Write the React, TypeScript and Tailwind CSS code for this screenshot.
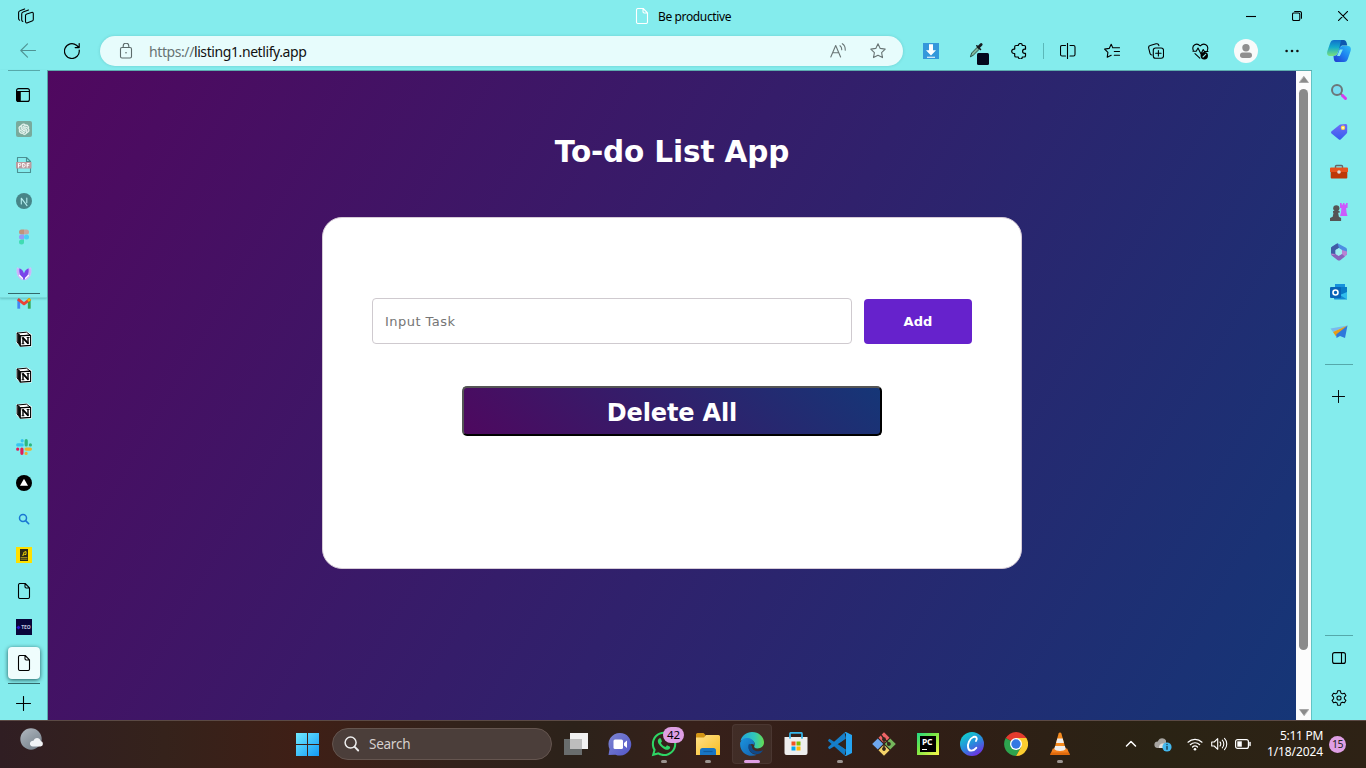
import React from "react";
import type { ReactNode } from "react";
import { AiOutlineOpenAI } from "react-icons/ai";
import { FaWhatsapp } from "react-icons/fa";

type IconProps = { children: ReactNode; w?: number; h?: number; box?: string; className?: string };

/* Line icon by default; coloured shapes set their own fill and stroke. */
function Icon({ children, w = 16, h = 16, box, className = "" }: IconProps) {
  return (
    <svg width={w} height={h} viewBox={box ?? `0 0 ${w} ${h}`} fill="none" stroke="currentColor" strokeWidth="1.1" strokeLinecap="round" strokeLinejoin="round" className={`block shrink-0 ${className}`}>
      {children}
    </svg>
  );
}

function Cell({ children, className = "w-11" }: { children?: ReactNode; className?: string }) {
  return <div className={`flex shrink-0 items-center justify-center ${className}`}>{children}</div>;
}

const PageIcon = ({ className = "" }: { className?: string }) => (
  <Icon className={className}>
    <path d="M4 .5h5.200l4.300 4.300V14A1.500 1.500 0 0 1 12 15.500H4A1.500 1.500 0 0 1 2.500 14V2A1.500 1.500 0 0 1 4 .5z M9 .8v3a1.200 1.200 0 0 0 1.200 1.200h3" />
  </Icon>
);

const PlusIcon = ({ size = 15 }: { size?: number }) => (
  <Icon w={size} h={size} box="0 0 15 15">
    <path d="M7.500 .5v14M.5 7.500h14" />
  </Icon>
);

function TitleBar() {
  return (
    <header className="flex h-8 shrink-0 items-center">
      <Cell className="w-[52px]">
        <Icon>
          <path d="M1.600 12.200C.8 11.800.6 11.300.6 10.600V4.600c0-1 .5-1.600 1.400-1.900L6.600.9M4.900 13.400c-.9-.3-1.200-.8-1.200-1.500V5.900c0-1 .5-1.500 1.400-1.800L10.500 2M8.800 5.900l4.700-1.500c1-.3 1.800.2 1.800 1.200v5.900c0 .8-.4 1.300-1.200 1.600l-4.600 1.700c-1 .4-2-.2-2-1.300V7.500c0-.8.500-1.300 1.300-1.600z" />
        </Icon>
      </Cell>
      <div className="flex flex-1 items-center gap-2 pl-[582px]">
        <PageIcon className="text-white" />
        <span className="mt-px text-[12px] tracking-[-0.37px] whitespace-nowrap">Be productive</span>
      </div>
      <Cell className="w-[46px]">
        <Icon w={10} h={10}><path d="M0 5.500h10" strokeLinecap="butt" /></Icon>
      </Cell>
      <Cell className="w-[46px]">
        <Icon w={10} h={10}>
          <rect x=".5" y="2" width="7.300" height="7.500" rx="1.300" />
          <path d="M2.700.5h4.800a2 2 0 0 1 2 2v4.800" />
        </Icon>
      </Cell>
      <Cell className="w-[46px]">
        <Icon w={10} h={10}><path d="M.3.300l9.400 9.400M9.700.3L.3 9.700" /></Icon>
      </Cell>
    </header>
  );
}

function Toolbar() {
  return (
    <div className="flex h-[38px] shrink-0 items-center">
      <Cell className="w-14">
        <Icon className="text-[#4f9293]"><path d="M15.500 7.500H.8M7.500.8L.8 7.500l6.700 6.700" /></Icon>
      </Cell>
      <Cell className="w-8">
        <Icon><path strokeWidth="1.200" d="M15.200 7A7.400 7.400 0 1 1 12.500 2.300l2.500 2.200M15.200.6v4h-4" /></Icon>
      </Cell>
      <div className="ml-3 flex h-[30px] w-[803px] shrink-0 items-center rounded-full bg-[#e7fcfc] pl-[18px] shadow-[0_0_3px_rgba(40,120,120,0.25)]">
        <Icon className="text-[#5d6b6b]">
          <rect x="2.500" y="4.500" width="11" height="10.500" rx="1.500" />
          <path d="M5.200 4.300V3a2.800 2.800 0 0 1 5.600 0v1.300" />
          <circle cx="8" cy="9.700" r=".8" fill="currentColor" stroke="none" />
        </Icon>
        <span className="ml-[15px] text-[14px] tracking-[-0.41px] whitespace-nowrap text-[#111]"><span className="text-[#687373]">https://</span>listing1.netlify.app</span>
        <div className="ml-auto flex pr-[5px]">
          <Cell className="w-10">
            <Icon className="text-[#697575]"><path d="M.8 14L5.700 2.500l4.900 11.500M2.600 9.800h6.200M10 2.700c1.300.9 1.800 2.200 1.700 4M12.300.7c2.300 1.300 3.100 3.500 2.900 6.500" /></Icon>
          </Cell>
          <Cell className="w-10">
            <Icon box="0 0 16 16" className="text-[#697575]"><path d="M8 .8l2.200 4.600 5 .7-3.600 3.500.9 5L8 12.300l-4.500 2.300.9-5L.8 6.100l5-.7z" /></Icon>
          </Cell>
        </div>
      </div>
      <Cell className="ml-1.5 w-11">
        <Icon>
          <path d="M0 0h16v16H0z" fill="#3498db" stroke="none" />
          <path d="M6 1.300h4v6h3L8 12.500 3 7.300h3zM4 13.700h8v1H4z" fill="#fff" stroke="none" />
        </Icon>
      </Cell>
      <Cell className="ml-1 w-11">
        <Icon w={22} h={26} className="mt-[2px]">
          <path d="M2.500 17.500l1.200-3.500L9.500 8l2 2-6 6z" fill="#7fb59b" stroke="#20443b" strokeWidth=".9" />
          <path d="M8.800 6.800l3.700 3.700" stroke="#161c20" strokeWidth="1.600" />
          <path d="M10.500 8.300l2.700-2.800" stroke="#161c20" strokeWidth="2.800" />
          <rect x="9" y="14" width="12" height="12" rx="1.500" fill="#03071c" stroke="none" />
        </Icon>
      </Cell>
      <Cell className="w-9">
        <Icon>
          <path strokeWidth="1.200" d="M5 2.500h2.300a2 2 0 0 1 4 0h1.900c.8 0 1.300.5 1.300 1.300v2.400h-.8a2.100 2.100 0 0 0 0 4.200h.8v2.300c0 .8-.5 1.300-1.300 1.300h-1.900a2 2 0 0 1-4 0H5c-.8 0-1.300-.5-1.300-1.300v-2.200h-.8a2.200 2.200 0 1 1 0-4.400h.8V3.800c0-.8.5-1.300 1.300-1.300z" />
        </Icon>
      </Cell>
      <div className="mr-0.5 ml-1.5 h-4 w-px bg-[#5bb8b9]" />
      <Cell>
        <Icon><path d="M5.500 2.500H2A1.500 1.500 0 0 0 .5 4v7.500A1.500 1.500 0 0 0 2 13h3.500M7.500.3v15.400M10 2.500h3.500A1.500 1.500 0 0 1 15 4v7.500a1.500 1.500 0 0 1-1.500 1.500H10" /></Icon>
      </Cell>
      <Cell>
        <Icon><path d="M8.700 4.600L7.200 1.200 5.200 5.400l-4.600.7L3.900 9.400l-.7 4.900 4-2.100M8.700 4.700h6.800M10.300 8.500h5.200M10.300 12.300h5.200" /></Icon>
      </Cell>
      <Cell>
        <Icon>
          <rect x="5.300" y="5" width="10.200" height="10.300" rx="2.300" />
          <path d="M10.400 7.500v5.400M7.700 10.200h5.400M4 12c-1.200-.1-1.800-.8-2-1.700L.7 5.200C.4 3.800 1 2.800 2.200 2.500L8 .8c1.500-.4 2.500.3 2.900 1.900" />
        </Icon>
      </Cell>
      <Cell>
        <Icon w={17} h={17}>
          <path d="M1.300 7.500C-.7 2.200 4.800-1 8.200 3 11.800-1 17.300 2.200 15.300 7.500M3 10.700l4.800 4.500" />
          <path d="M1 8.200h3.200L6 5l3 6 2.200-4.500 1.200 2h3.600" />
          <circle cx="12.300" cy="12.800" r="3.700" fill="#000" stroke="none" />
          <path d="M11 14l2.700-2.700" stroke="#84eced" />
        </Icon>
      </Cell>
      <Cell className="w-12">
        <div className="flex size-6 items-center justify-center rounded-full bg-[#f8fafa]">
          <Icon w={12} h={14}><circle cx="6" cy="3.700" r="3.700" fill="#8f8f8f" stroke="none" /><rect x="0" y="8.500" width="12" height="5.500" rx="2.700" fill="#8f8f8f" stroke="none" /></Icon>
        </div>
      </Cell>
      <Cell>
        <Icon w={14} h={4}><g fill="#111" stroke="none"><circle cx="1.600" cy="2" r="1.300" /><circle cx="7" cy="2" r="1.300" /><circle cx="12.400" cy="2" r="1.300" /></g></Icon>
      </Cell>
      <Cell className="w-[50px]">
        <svg width="24" height="22" viewBox="0 0 24 22" className="block">
          <defs>
            <linearGradient id="cpa" x1="0" y1="0" x2="0" y2="1"><stop stopColor="#116fcb" /><stop offset=".45" stopColor="#14aacc" /><stop offset="1" stopColor="#7be17b" /></linearGradient>
            <linearGradient id="cpb" x1="1" y1="0" x2="0" y2="1"><stop stopColor="#2fc0f7" /><stop offset=".5" stopColor="#1c7eef" /><stop offset="1" stopColor="#2336ce" /></linearGradient>
          </defs>
          <path d="M7 0h9.500L10.500 13c-.8 2.300-2 3-4 3H3C0 16-.3 13.500.4 11L3 3.500C3.800 1 5 0 7 0z" fill="url(#cpa)" />
          <path d="M14 0h2.500c2 0 2.800 1.500 3.300 3.500l.5 2h-4c-1.800 0-2.800.6-3.500 2.500L12 10z" fill="#0d57b0" />
          <path d="M17 6h4c2.800 0 3.300 2.500 2.600 5L21 18.500c-.8 2.500-2 3.500-4 3.500H9.500c-2.300 0-2.500-2-2.800-4l-.2-2c2.300 0 3.500-.7 4.300-3l1.600-4.500C13.200 6.500 14.500 6 17 6z" fill="url(#cpb)" />
          <path d="M12.800 9.500h3L12.800 16H10z" fill="#84eced" />
        </svg>
      </Cell>
    </div>
  );
}

const Notion = () => (
  <Icon>
    <path d="M.3 1.300L10.800.2l5 3.200v12.200l-11.500.4-4-4z" fill="#fff" stroke="none" />
    <path d="M1.500 2l9-.8L14.200 4 5 4.700z" fill="#fff" stroke="#000" strokeWidth="1" />
    <path d="M1.300 2.200L4 4.600v10.200L1.300 11.200z" fill="#111" stroke="#000" strokeWidth=".7" />
    <path d="M4.300 4.900l10.300-.7v10.200l-10.300.7z" fill="#fff" stroke="#000" strokeWidth="1.100" />
    <path d="M7 12.500V7M12 12.300V6.500" stroke="#000" strokeWidth="1.400" /><path d="M7.200 7.200l4.600 5" stroke="#000" strokeWidth="1.900" />
    <path d="M6 6.800h1.500M11 6.500h2.200M6 12.700h2" stroke="#000" strokeWidth=".8" />
  </Icon>
);

const Figma = () => (
  <Icon className="opacity-55"><g stroke="none">
    <path d="M5.500.5H8v5H5.500a2.500 2.500 0 0 1 0-5z" fill="#f24e1e" /><path d="M8 .5h2.500a2.500 2.500 0 0 1 0 5H8z" fill="#ff7262" />
    <path d="M5.500 5.500H8v5H5.500a2.500 2.500 0 0 1 0-5z" fill="#a259ff" /><circle cx="10.500" cy="8" r="2.500" fill="#1abcfe" /><path d="M5.500 10.500H8V13a2.500 2.500 0 1 1-2.500-2.500z" fill="#0acf83" />
  </g></Icon>
);

const Slack = () => (
  <Icon><g strokeWidth="3.200">
    <path d="M6.200 1.700v.1M1.700 5.900h4.500" stroke="#36c5f0" /><path d="M10.200 1.700v4.200M14.400 6v-.1" stroke="#2eb67d" />
    <path d="M5.900 10.100v4.200M1.700 10.100v.1" stroke="#e01e5a" /><path d="M10.100 10.100h4.300M10.100 14.300v.1" stroke="#ecb22e" />
  </g></Icon>
);

function TabStrip() {
  const slot = "h-9 w-12";
  return (
    <aside className="flex w-[47px] shrink-0 flex-col">
      <div className="relative z-10 flex h-[228px] shrink-0 flex-col border-b border-[#7ad9da] shadow-[0_1px_2px_rgba(0,80,80,0.25)]">
        <div className="mx-2 h-px w-8 bg-[#57a9aa]" />
        <Cell className="mt-2 h-8 w-[46px]">
          <Icon w={14} h={14}><rect x=".6" y=".6" width="12.800" height="12.800" rx="2" /><path d="M.6 3.500h12.800M4 3.500v10" /><path d="M.8 3.500H4v9.900H2.400a1.600 1.600 0 0 1-1.600-1.600z" fill="#000" /></Icon>
        </Cell>
        <Cell className={slot}>
          <div className="flex size-4 items-center justify-center rounded-[2px] bg-[#79aa9c] text-[#eefaf6]"><AiOutlineOpenAI size={14} strokeWidth={30} stroke="currentColor" /></div>
        </Cell>
        <Cell className={slot}>
          <Icon><path d="M1.500 5V.5h9l4 4V15.500h-13V11M10.500.7v3.800h3.800" stroke="#4b9092" /><rect x="0" y="5" width="15.500" height="6.500" fill="#bd9b9f" stroke="none" />
            <path d="M2.500 10.200V6.400h1.200a1.100 1.100 0 0 1 0 2.200H2.500M6.700 6.400v3.800h.6a1.900 1.900 0 0 0 0-3.800zM11.200 10.200V6.400h2M11.200 8.200h1.600" stroke="#fff" strokeWidth="1" /></Icon>
        </Cell>
        <Cell className={slot}>
          <Icon><circle cx="8" cy="8" r="8" fill="#478588" stroke="none" /><path d="M5.300 11V5.200l5.700 7.400M10.800 5v4.700" stroke="#b5eeee" /></Icon>
        </Cell>
        <Cell className={slot}><Figma /></Cell>
        <Cell className={slot}>
          <Icon className="translate-y-px">
            <path d="M1.200 2c2 0 4 1.500 5 5L7.300 14C3.300 13.500-.5 8.500 1.200 2z" fill="#c9b0fa" stroke="#d8c5ff" strokeWidth=".6" />
            <path d="M14.800 2c-2 0-4 1.500-5 5l-1.100 7c4-.5 7.800-5.500 6.100-12z" fill="#c9b0fa" stroke="#d8c5ff" strokeWidth=".6" />
            <path d="M3.500 2.300C6 3.300 7.200 5 8 7.500c.8-2.500 2-4.200 4.500-5.200.7 4-.5 8.200-4.500 11.700C4 10.500 2.800 6.300 3.500 2.300z" fill="#7a44ea" stroke="none" />
            <path d="M3.500 9.500l3 2.700M12.500 9.500l-3 2.700" stroke="#fff" strokeWidth="1.300" />
          </Icon>
        </Cell>
        <div className="mx-2 mt-[2px] h-px w-8 bg-[#32696b]" />
      </div>
      <div className="flex flex-1 flex-col overflow-hidden">
        <Cell className="-mt-[13px] h-9 w-12">
          <Icon w={14} h={14} box="0 0 16 16" className="-mt-px"><g strokeWidth="3.200" strokeLinecap="butt"><path d="M2 14.500V4" stroke="#4285f4" /><path d="M14 14.500V4" stroke="#34a853" /><path d="M1 3.500l7 5.500 7-5.500" stroke="#ea4335" /><path d="M12.300 5.400l2.900-2.200" stroke="#fbbc04" /></g></Icon>
        </Cell>
        <Cell className={slot}><Notion /></Cell>
        <Cell className={slot}><Notion /></Cell>
        <Cell className={slot}><Notion /></Cell>
        <Cell className={slot}><Slack /></Cell>
        <Cell className={slot}><Icon><circle cx="8" cy="8" r="8" fill="#000" stroke="none" /><path d="M8 3.800l4 6.900H4z" fill="#fff" stroke="none" /></Icon></Cell>
        <Cell className={slot}><Icon w={12} h={12}><circle cx="5" cy="5" r="3.500" stroke="#1976d2" strokeWidth="1.500" /><path d="M7.600 7.600L10.700 10.700" stroke="#1976d2" strokeWidth="1.600" /></Icon></Cell>
        <Cell className={slot}>
          <Icon><path d="M0 0h16v16H0z" fill="#ffe000" stroke="none" /><path d="M4 2h8v12H4z" fill="#2b2a18" stroke="none" /><path d="M6.500 8.200h1.200V5.500L10 4.500v3H8.800" stroke="#ffe000" strokeWidth=".9" /><path d="M5 10.500h6M5 12.200h6" stroke="#a89418" strokeWidth=".9" /></Icon>
        </Cell>
        <Cell className={slot}><PageIcon /></Cell>
        <Cell className={slot}>
          <div className="flex size-4 items-center justify-center gap-px bg-[#09063a] text-[5px] leading-none font-bold text-[#c5c4de]"><i className="size-[3px] rotate-45 bg-[#2917d2]" />TEO</div>
        </Cell>
        <Cell className={slot}>
          <div className="flex size-8 items-center justify-center rounded bg-[#effdfd] shadow-[0_1px_4px_rgba(0,40,40,0.75)]"><PageIcon /></div>
        </Cell>
        <div className="mx-2 mt-[2px] h-px w-8 shrink-0 bg-[#32696b]" />
        <Cell className="h-[39px] w-[47px] shrink-0"><PlusIcon /></Cell>
      </div>
    </aside>
  );
}

function SideRail() {
  const slot = "h-10 w-[54px]";
  return (
    <aside className="flex w-[54px] shrink-0 flex-col pt-[2px]">
      <Cell className={slot}>
        <Icon w={18} h={18}><path d="M10.500 10.500l2 2" stroke="#777" strokeWidth="2" /><path d="M12.500 12.500l3 3" stroke="#d63cf0" strokeWidth="3" /><circle cx="7" cy="7" r="5" fill="#79def2" stroke="#6c7679" strokeWidth="2" /></Icon>
      </Cell>
      <Cell className={slot}>
        <svg width="18" height="18" viewBox="0 0 18 18" className="block"><defs><linearGradient id="tag" x1="0" x2="0" y1="0" y2="1"><stop stopColor="#706df8" /><stop offset="1" stopColor="#345ced" /></linearGradient></defs>
          <path d="M10 1.500l5.500-.5c1 0 1.700.5 1.700 1.500v6.500c0 .8-.3 1.300-.8 1.800l-5.500 5.500c-.8.700-1.600.7-2.300 0L1.500 10.500c-.7-.8-.6-1.500.1-2.200z" fill="url(#tag)" /><circle cx="13" cy="4.800" r="2.200" fill="#ffd744" /><circle cx="13" cy="4.800" r=".9" fill="#fff" /></svg>
      </Cell>
      <Cell className={slot}>
        <Icon w={18} h={16}><path d="M5.500 4V2.500a1 1 0 0 1 1-1h5a1 1 0 0 1 1 1V4" stroke="#656568" strokeWidth="1.400" /><path d="M1 3.500h16a1 1 0 0 1 1 1V8H0V4.500a1 1 0 0 1 1-1z" fill="#e6531d" stroke="none" /><path d="M.7 8h16.600v5.500a1 1 0 0 1-1 1H1.700a1 1 0 0 1-1-1z" fill="#be3808" stroke="none" /><circle cx="9" cy="8" r="1.800" fill="#ddd" stroke="none" /></Icon>
      </Cell>
      <Cell className={slot}>
        <Icon w={18} h={18}><path d="M10 0h1.700v1.500H13V0h1.500v1.500H16V0h1.700L17.500 5h-1.400l.4 4.500 1 3.500H10l1-3.500.4-4.500H10z" fill="#ca5bfc" stroke="none" /><g fill="#555" stroke="none"><circle cx="6.300" cy="5.300" r="3.100" /><path d="M3 8h6.600v1.700H8.100l.8 4 2.200 1.300V18H0v-3l2.700-1.300.8-4H3z" /></g></Icon>
      </Cell>
      <Cell className={slot}>
        <svg width="18" height="18" viewBox="0 0 18 18" className="block"><path d="M7.500.3l8 4.300c1.200.6 1.500 1.400 1.500 2.600v5L12 10V7L8.500 4.800 5.500 7v5.500l-3-1.700C1.200 10 1 9 1 8V5.500c0-1 .4-1.500 1.300-2z" fill="#4d8de2" /><path d="M7.500.3L2.300 3.500C1.400 4 1 4.500 1 5.500v5.200c0 .9.500 1.500 1.300 2L5.500 14V6.800L9 4.900z" fill="#405ca6" /><path d="M1 10.500c0 1 .4 1.600 1.300 2.100l5.200 3.500c1 .6 2 .6 3 0l5-3.200c1-.6 1.500-1.400 1.500-2.500V8.500L12 7v4l-3.500 2L5 11z" fill="#b982d3" /><path d="M5.500 11L1.700 12.400l5.700 4.500c1.200.7 2.100.7 3.200 0l4.300-3.300L12 11l-3.500 2z" fill="#8763bc" /><path d="M8.700 5.300L12 7.200v3.600l-3.300 2-3.200-2V7.200z" fill="#9eeef0" /></svg>
      </Cell>
      <Cell className={slot}>
        <Icon w={18} h={18}><g stroke="none"><path d="M5 1h10v6.500H5z" fill="#1691dd" /><path d="M8 4h9v7H8z" fill="#087bc7" /><path d="M4 11h13v5.500H5c-.7 0-1-.3-1-1z" fill="#138bd3" /><path d="M17 9v7.500L10 12z" fill="#30bdec" /><rect y="4" width="11" height="11" rx="1" fill="#0864b8" /></g><circle cx="5.500" cy="9.500" r="2.500" stroke="#fff" strokeWidth="1.600" /></Icon>
      </Cell>
      <Cell className={slot}>
        <Icon w={18} h={16}><g stroke="none"><path d="M.5 4.500L17.500 1.500 3 8z" fill="#79b9ed" /><path d="M3 8L17.500 1.500 6 12.500z" fill="#e99c17" /><path d="M17.500 1.500L15 14l-5-2-3.500 2-.3-3.500z" fill="#2e79db" /></g></Icon>
      </Cell>
      <div className="mx-auto mt-3 h-px w-7 bg-[#55a8aa]" />
      <Cell className="mt-[11px] h-10 w-[53px]"><PlusIcon size={13} /></Cell>
      <div className="mx-auto mt-auto h-px w-7 bg-[#55a8aa]" />
      <Cell className="mt-[2px] h-10 w-[54px]"><Icon w={14} h={12}><rect x=".6" y=".6" width="12.800" height="10.800" rx="2" /><path d="M9.500.6v10.800" /></Icon></Cell>
      <Cell className="mb-[2px] h-10 w-[54px]">
        <Icon w={16} h={16} box="0 0 17 17"><circle cx="8.500" cy="8.500" r="2.200" /><path d="M7 .8h3l.5 2.400 1.600.9 2.300-.7 1.500 2.600-1.700 1.600v1.800l1.700 1.600-1.500 2.600-2.300-.7-1.600.9-.5 2.400H7l-.5-2.400-1.600-.9-2.300.7L1.100 11l1.700-1.600V7.600L1.100 6l1.500-2.600 2.300.7 1.600-.9z" /></Icon>
      </Cell>
    </aside>
  );
}

function TodoPage() {
  return (
    <main className="flex w-[1248px] shrink-0 flex-col items-center bg-[linear-gradient(120deg,#50085f,#153677)] pt-[58px] font-[Verdana,'DejaVu_Sans',sans-serif]">
      <h1 className="h-[46px] text-[29.500px] leading-[46px] font-bold tracking-[-0.14px] text-white">To-do List App</h1>
      <section className="mt-[42px] flex h-[352px] w-[700px] flex-col items-center rounded-[20px] border border-[#d6cbd7] bg-white pt-20">
        <form className="flex w-[600px] items-center gap-3" onSubmit={(e) => e.preventDefault()}>
          <input placeholder="Input Task" className="h-[46px] w-[480px] rounded border border-[#cfcacf] px-3 text-[13px] tracking-[0.47px] outline-none placeholder:text-[#757575]" />
          <button className="mt-px h-[45px] w-[108px] rounded bg-[#6622cc] text-[13px] font-bold tracking-[0.1px] text-white">Add</button>
        </form>
        <button className="mt-[42px] h-[50px] w-[420px] rounded-[5px] border-2 border-t-[#555] border-r-black border-b-black border-l-[#555] bg-[linear-gradient(45deg,#4e085f,#153677)] pt-1 text-[24px] leading-[42px] font-bold tracking-[-0.15px] text-white">Delete All</button>
      </section>
    </main>
  );
}

function Scrollbar() {
  return (
    <div className="flex w-4 shrink-0 flex-col items-center border-r border-[#61c4c6] bg-[#fcfcfc] pt-[5px] pb-1">
      <Icon w={10} h={7}><path d="M5 .5l4.500 6H.5z" fill="#8b8b8b" stroke="#8b8b8b" strokeWidth=".5" /></Icon>
      <div className="mt-[6px] h-[561px] w-[9px] rounded-full bg-[#8b8b8b]" />
      <Icon w={10} h={7} className="mt-auto"><path d="M5 6.500L.5.500h9z" fill="#8b8b8b" stroke="#8b8b8b" strokeWidth=".5" /></Icon>
    </div>
  );
}

function TaskItem({ children, mark }: { children: ReactNode; mark?: "open" | "active" }) {
  return (
    <div className="relative flex h-12 w-11 shrink-0 items-center justify-center">
      {mark === "active" && <div className="absolute inset-x-[2px] top-1 h-10 rounded border border-white/5 bg-white/6" />}
      <div className="relative">{children}</div>
      {mark === "open" && <i className="absolute bottom-[5px] h-[3px] w-1.5 rounded-full bg-[#9b9490]" />}
      {mark === "active" && <i className="absolute bottom-[5px] h-[3px] w-4 rounded-full bg-[#df9fe4]" />}
    </div>
  );
}

function Taskbar() {
  return (
    <footer className="flex h-12 shrink-0 items-center bg-[linear-gradient(90deg,#301e23_0%,#35221b_12%,#3f1f16_22%,#33221b_33%,#2c221a_42%,#37201a_51%,#301e16_68%,#2a2314_85%,#2e2215_100%)] shadow-[inset_0_1px_0_#5b4a45]">
      <div className="-mt-[10px] w-[285px] pl-5">
        <Icon w={24} h={22}>
          <defs><linearGradient id="moon" x1="0" y1="0" x2=".7" y2="1"><stop stopColor="#b1b8c0" /><stop offset="1" stopColor="#78838d" /></linearGradient></defs>
          <circle cx="11" cy="11" r="10.700" fill="url(#moon)" stroke="none" /><path d="M13 18.500h7.500a2.800 2.800 0 0 0 .3-5.500c-1.200-4.300-6.500-3.800-7.300-.2-4.500-.3-4.700 5.700-.5 5.700z" fill="#f0f2f5" stroke="none" />
        </Icon>
      </div>
      <TaskItem>
        <Icon w={24} h={24} className="translate-x-[0.5px] translate-y-[0.5px]"><defs><linearGradient id="win" x1="0" y1="0" x2="1" y2="1"><stop stopColor="#70eaff" /><stop offset="1" stopColor="#139af6" /></linearGradient></defs>
          <path d="M.5.5h11v11H.5zM12.500.5h11v11h-11zM.5 12.500h11v11H.5zM12.500 12.500h11v11h-11z" fill="url(#win)" stroke="none" /></Icon>
      </TaskItem>
      <div className="mr-[2px] ml-[3px] flex h-8 w-[220px] shrink-0 items-center rounded-full border border-[#65554f] bg-[#4b3e3a] pl-[11px]">
        <Icon w={16} h={16} className="text-[#eee]"><circle cx="6.600" cy="6.600" r="5.500" strokeWidth="1.500" /><path d="M10.700 10.800L14.200 14.500" strokeWidth="1.900" /></Icon>
        <span className="ml-[9px] text-[13.500px] tracking-[-0.25px] text-[#d6d0ce]">Search</span>
      </div>
      <TaskItem>
        <Icon w={24} h={22}><g stroke="none"><path d="M6 0h18v16H6z" fill="#f1f1f1" /><path d="M0 6h18v16H0z" fill="#696d6d" /><path d="M6 6h12v10H6z" fill="#bdbdbd" /></g></Icon>
      </TaskItem>
      <TaskItem>
        <svg width="24" height="24" viewBox="0 0 24 24" className="block"><defs><linearGradient id="chat" x1="0" y1="0" x2="1" y2="1"><stop stopColor="#7d85d1" /><stop offset="1" stopColor="#5256c9" /></linearGradient></defs>
          <path d="M12 1a11.300 11.300 0 1 1-4.500 21.700L.5 23l1-6A11.300 11.300 0 0 1 12 1z" fill="url(#chat)" /><rect x="5.500" y="7.500" width="9.500" height="9.500" rx="1.500" fill="#fff" /><path d="M16 11l3-2.500v7.500L16 13.500z" fill="#fff" /></svg>
      </TaskItem>
      <TaskItem mark="open">
        <FaWhatsapp size={28} className="block text-[#2ed665]" />
        <span className="absolute -top-[3px] left-[13px] flex h-4 w-[21px] items-center justify-center rounded-full bg-[#df9fe4] text-[11.500px] leading-none text-black">42</span>
      </TaskItem>
      <TaskItem mark="open">
        <svg width="24" height="22" viewBox="0 0 24 22" className="block"><defs><linearGradient id="fold" x1="0" y1="0" x2="1" y2="1"><stop stopColor="#ffe18a" /><stop offset="1" stopColor="#f9bd21" /></linearGradient></defs>
          <path d="M0 1.500A1.500 1.500 0 0 1 1.500 0h6l2 2v4H0z" fill="#d39515" /><path d="M0 4.500h8L10 2h12.500A1.500 1.500 0 0 1 24 3.500V22H0z" fill="url(#fold)" /><path d="M4 22v-4.500A2.500 2.500 0 0 1 6.500 15h11a2.500 2.500 0 0 1 2.500 2.500V22z" fill="#1875c4" /><path d="M7.500 18.500h9" stroke="#0f5b9e" strokeWidth="1.200" /></svg>
      </TaskItem>
      <TaskItem mark="active">
        <svg width="24" height="24" viewBox="0 0 24 24" className="block"><defs><linearGradient id="ea" x1="0" y1=".3" x2="1" y2=".3"><stop stopColor="#20a4df" /><stop offset=".6" stopColor="#31c7b9" /><stop offset="1" stopColor="#65dc50" /></linearGradient><linearGradient id="eb" x1="0" y1="0" x2="1" y2="1"><stop stopColor="#1b94df" /><stop offset="1" stopColor="#1460ac" /></linearGradient></defs>
          <path d="M.5 9C1.800 3.500 6.500 0 12 0c7 0 12 5 12 10.300 0 4-3 6.200-6.500 6.200-3 0-4-1.500-3-3.200 1-2-.7-5-4.500-5C6 8.300 2 8 .5 9z" fill="url(#ea)" /><path d="M.2 10.500C2 6 6 5.300 9.500 6.300c3.800 1 5.600 4.500 5 7-3-3-6.500 0-5.500 4 .8 3.300 4.500 5.700 8.500 5.300C9 26.500-1 21 .2 10.500z" fill="url(#eb)" /><path d="M9 11.800c-3 6 3.500 11.500 10 10 1.800-.7 3.300-2.200 4-3.600-5 2.200-11.500.6-11-4.300z" fill="#104a8a" /></svg>
      </TaskItem>
      <TaskItem>
        <Icon w={24} h={24}><path d="M6 6V1.800c0-.7.3-1 1-1h10c.7 0 1 .3 1 1V6" stroke="#36b8ee" strokeWidth="1.700" /><path d="M.5 5h23v16a2 2 0 0 1-2 2h-19a2 2 0 0 1-2-2z" fill="#eee" stroke="none" /><path d="M6 5v1M18 5v1" stroke="#36b8ee" strokeWidth="1.700" /><g stroke="none"><path d="M7.500 9.500h4v4h-4z" fill="#f35325" /><path d="M12.500 9.500h4v4h-4z" fill="#81bc06" /><path d="M7.500 14.500h4v4h-4z" fill="#05a6f0" /><path d="M12.500 14.500h4v4h-4z" fill="#ffba08" /></g></Icon>
      </TaskItem>
      <TaskItem mark="open">
        <Icon w={24} h={24}><g stroke="none"><path d="M1.500 6.700L.2 8v1l16.300 14.500 1.500-6z" fill="#127bc4" /><path d="M1.500 17.300L.2 16v-1L16.500.5 18 7z" fill="#167fca" /><path d="M16.500.3L18 0l6 3v18l-6 3-1.500-.5 1.500-1V2z" fill="#25a4f1" /><path d="M18 6.500v11L11 12z" fill="#32251d" /></g></Icon>
      </TaskItem>
      <TaskItem>
        <Icon w={24} h={24} box="0 0 25 25"><g stroke="none"><path d="M12.500.2L18.200 6l-5.700 5.700L6.800 6z" fill="#ee6466" /><path d="M6 6.800l5.700 5.700L6 18.200.2 12.500z" fill="#6ea6ed" /><path d="M19 6.800l5.800 5.700L19 18.200l-5.700-5.700z" fill="#75b75c" /><path d="M12.500 13.300L18.200 19l-5.700 5.800L6.800 19z" fill="#f5d369" /></g><path d="M9.500 3l3 4v12M12.500 7l6 5.500" stroke="#33251d" strokeWidth="1.500" /><g fill="#33251d" stroke="none"><circle cx="12.500" cy="7.500" r="2" /><circle cx="12.500" cy="17.500" r="2" /><circle cx="17.500" cy="12.500" r="2" /></g></Icon>
      </TaskItem>
      <TaskItem>
        <div className="flex h-[22px] w-[22px] items-center justify-center bg-[linear-gradient(135deg,#21d789,#74e645_40%,#fcf84a)]">
          <div className="flex size-4 flex-col bg-black pt-px pl-[2px] text-[8.500px] leading-[10px] font-bold tracking-[-0.2px] text-white"><span>PC</span><i className="mt-[2px] h-px w-[5px] bg-white" /></div>
        </div>
      </TaskItem>
      <TaskItem>
        <div className="flex size-6 items-center justify-center rounded-full bg-[linear-gradient(150deg,#14c7cf_15%,#288bdc_50%,#6b36e2_85%)]">
          <Icon w={14} h={18}><path d="M11 6C13 3 11 1 8.300 2 4.300 3.700 2.500 9 3.100 12.500c.7 4.200 5.200 4 8.200.3" stroke="#fff" strokeWidth="1.900" /></Icon>
        </div>
      </TaskItem>
      <TaskItem>
        <Icon w={24} h={24}><g stroke="none"><path d="M12 12L1.700 6A12 12 0 0 1 22.400 6z" fill="#e33b2e" /><path d="M12 12L1.700 6A12 12 0 0 0 12 24l5.200-9z" fill="#2da44e" /><path d="M12 24a12 12 0 0 0 10.400-18H12l5.200 9z" fill="#fccd30" /><circle cx="12" cy="12" r="6" fill="#fff" /><circle cx="12" cy="12" r="4.700" fill="#3478e3" /></g></Icon>
      </TaskItem>
      <TaskItem mark="open">
        <Icon w={20} h={24}><g stroke="none"><path d="M2.800 16.500h14.400l2.300 5.700H.5z" fill="#f58220" /><path d="M8.600 1.500c.4-1.300 2.400-1.300 2.800 0l4.300 15.500c-1 2.500-10.400 2.500-11.400 0z" fill="#f68b1f" /><path d="M7.300 6.500h5.400l1.200 4.500H6.100zM5.100 14h9.800l.8 3c-1.500 2.500-9.900 2.500-11.400 0z" fill="#eee" /><path d="M1 20.500h18l1 2.500H0z" fill="#df690b" /></g></Icon>
      </TaskItem>
      <Cell className="ml-8 w-[34px]"><Icon w={12} h={8} className="text-white"><path d="M1.500 6L6 1.500 10.500 6" strokeWidth="1.500" /></Icon></Cell>
      <Cell className="w-[30px]">
        <Icon w={18} h={16}><path d="M3.500 12a3 3 0 0 1 .3-6.500C5 1.500 10 1 12 4.500v7.500z" fill="#a8a5a1" stroke="none" /><path d="M5 12c-.5-3 2-5 5-4.500V12z" fill="#e1dfdc" stroke="none" /><circle cx="13" cy="11" r="4.600" fill="#43b8ee" stroke="none" /><path d="M13 10.500v2.800M13 8.500v.1" stroke="#153445" strokeWidth="1.300" /></Icon>
      </Cell>
      <Cell className="ml-1 w-[26px]">
        <Icon w={16} h={14} className="text-white"><path d="M1 5.200a10 10 0 0 1 14 0M3.300 7.700a6.700 6.700 0 0 1 9.400 0M5.500 10a3.600 3.600 0 0 1 5 0" strokeWidth="1.200" /><circle cx="8" cy="12.200" r="1.300" fill="#fff" stroke="none" /></Icon>
      </Cell>
      <Cell className="w-[23px]">
        <Icon w={17} h={14} className="text-white"><path d="M.7 5h2.500l3.500-3.300v10.600L3.200 9H.7zM9 5c1 1 1 3 0 4M11.300 3.200c2 2 2 5.600 0 7.600M13.500 1.400c3 3 3 8.200 0 11.200" /></Icon>
      </Cell>
      <Cell className="w-6">
        <Icon w={16} h={10} className="text-white"><rect x=".6" y=".6" width="12.800" height="8.800" rx="2" strokeWidth="1.200" /><path d="M2.300 2.300h4.500v5.400H2.300z" fill="#fff" stroke="none" /><path d="M15 3.500v3" strokeWidth="1.500" /></Icon>
      </Cell>
      <div className="flex w-[68px] flex-col items-end text-[12px] leading-4 tracking-[-0.1px] whitespace-nowrap text-white">
        <span className="tracking-[-0.3px]">5:11 PM</span>
        <span>1/18/2024</span>
      </div>
      <div className="ml-1.5 flex h-[17px] w-[17px] items-center justify-center rounded-full bg-[#df9fe4] text-[10.500px] leading-none tracking-[-0.5px] text-[#222]">15</div>
    </footer>
  );
}

export default function App() {
  return (
    <div className="flex h-[768px] w-[1366px] flex-col overflow-hidden bg-[#84eced] font-['Noto_Sans',sans-serif] text-black">
      <TitleBar />
      <Toolbar />
      <div className="flex h-[650px] shrink-0">
        <TabStrip />
        <div className="flex border-t border-l border-[#5cacae]">
          <TodoPage />
          <Scrollbar />
        </div>
        <SideRail />
      </div>
      <Taskbar />
    </div>
  );
}
